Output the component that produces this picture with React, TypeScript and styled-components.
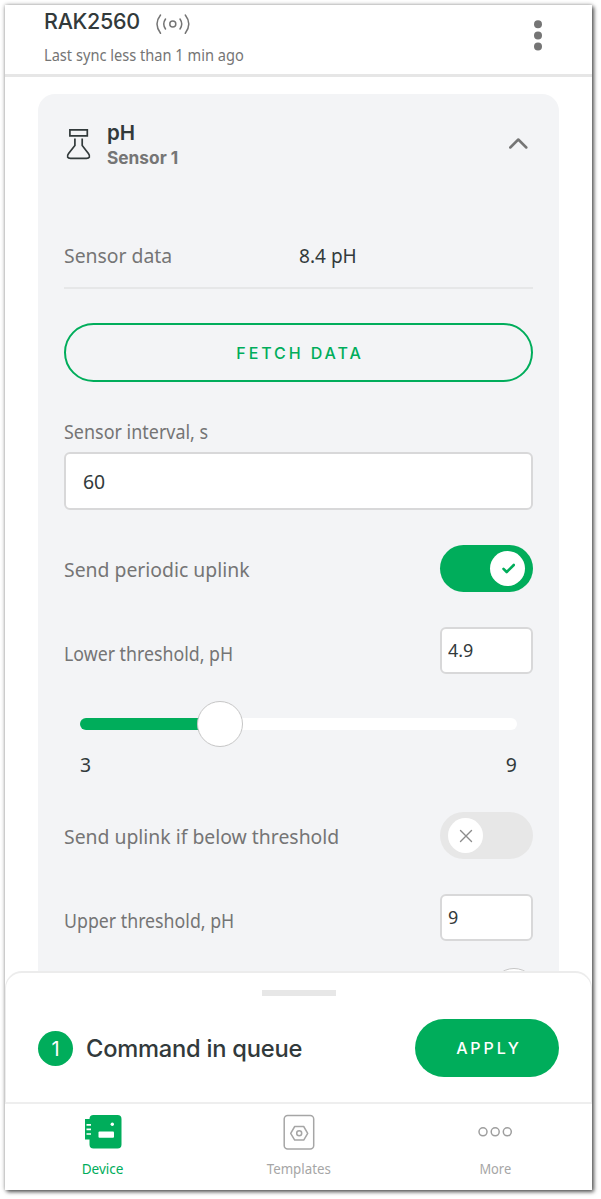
import React from "react";
import styled, { createGlobalStyle } from "styled-components";

const green = "#00ad5b";
const ink = "#323a3b";
const grey = "#757575";

const GlobalStyle = createGlobalStyle`
  * { box-sizing: border-box; }
  body { margin: 0; background: #fff; overflow: hidden; }
`;

const Page = styled.div`
  width: 601px;
  height: 1199px;
  padding: 5px 9px 9px 5px;
  background: #fff;
`;

const Phone = styled.div`
  width: 587px;
  height: 1185px;
  display: flex;
  flex-direction: column;
  background: #fff;
  box-shadow: 0 0 4px rgba(0, 0, 0, 0.35), 2px 2px 4px rgba(0, 0, 0, 0.6);
`;

const Label = styled.span<{ $size: number; $color?: string; $narrow?: number; $origin?: string }>`
  display: inline-block;
  font-family: "Noto Sans", sans-serif;
  font-size: ${(p) => p.$size}px;
  line-height: 28px;
  transform: scaleX(${(p) => p.$narrow ?? 0.945});
  transform-origin: ${(p) => p.$origin ?? "left"};
  color: ${(p) => p.$color ?? grey};
  white-space: nowrap;
`;

const Heading = styled.span<{ $size: number; $weight: number; $color?: string; $spacing?: number }>`
  font-family: Inter, sans-serif;
  font-size: ${(p) => p.$size}px;
  font-weight: ${(p) => p.$weight};
  line-height: 26px;
  letter-spacing: ${(p) => p.$spacing ?? 0}px;
  color: ${(p) => p.$color ?? ink};
  white-space: nowrap;
`;

const Header = styled.header`
  height: 72px;
  flex: none;
  display: flex;
  justify-content: space-between;
  padding: 3px 50px 0 39px;
  border-bottom: 3px solid #e6e6e6;
`;

const TitleRow = styled.div`
  display: flex;
  align-items: center;
  gap: 15px;
  height: 28px;
`;

const DeviceName = styled(Heading)`
  padding-bottom: 2px;
`;

const SyncRow = styled.div`
  margin-top: 5px;
`;

const MenuButton = styled.button`
  border: 0;
  background: none;
  padding: 12px 0 0;
  height: 44px;
  display: flex;
`;

const Content = styled.main`
  flex: 1;
  min-height: 0;
  overflow: hidden;
  padding: 17px 33px 0;
`;

const Card = styled.section`
  height: 1000px;
  padding: 0 26px;
  border-radius: 17px;
  background: #f3f4f6;
`;

const CardHeader = styled.div`
  height: 128px;
  padding-top: 26px;
  display: flex;
  align-items: flex-start;
`;

const FlaskSlot = styled.div`
  width: 43px;
  padding: 8px 0 0 2px;
`;

const Names = styled.div`
  flex: 1;
  display: flex;
  flex-direction: column;
`;

const SensorName = styled(Heading)`
  margin-top: -1px;
`;

const ChevronSlot = styled.div`
  padding: 16px 5px 0 0;
`;

const DataRow = styled.div`
  height: 67px;
  padding-top: 19px;
  display: grid;
  grid-template-columns: 1fr 1fr;
  border-bottom: 2px solid #e6e7e8;
`;

const FetchButton = styled.button`
  display: flex;
  align-items: center;
  justify-content: center;
  width: 100%;
  height: 59px;
  margin-top: 34px;
  padding: 1px 0 0 3px;
  border: 2px solid ${green};
  border-radius: 30px;
  background: transparent;
`;

const FieldLabel = styled.div`
  height: 70px;
  padding-top: 36px;
  display: flex;
`;

const Field = styled.div<{ $small?: boolean }>`
  display: flex;
  align-items: center;
  width: ${(p) => (p.$small ? "93px" : "100%")};
  height: ${(p) => (p.$small ? 47 : 58)}px;
  padding: ${(p) => (p.$small ? "0 0 2px 6px" : "0 0 1px 17px")};
  border: 2px solid #d8d8d9;
  border-radius: 6px;
  background: #fff;
`;

const Row = styled.div<{ $top: number }>`
  display: flex;
  align-items: center;
  justify-content: space-between;
  height: 47px;
  margin-top: ${(p) => p.$top}px;
`;

const RowLabel = styled.div<{ $shift?: number }>`
  padding-top: ${(p) => p.$shift ?? 0}px;
`;

const Switch = styled.div<{ $on?: boolean }>`
  display: flex;
  align-items: center;
  justify-content: ${(p) => (p.$on ? "flex-end" : "flex-start")};
  width: 93px;
  height: 47px;
  padding: 0 8px;
  border-radius: 24px;
  background: ${(p) => (p.$on ? green : "#e7e7e7")};
`;

const Knob = styled.div`
  display: flex;
  align-items: center;
  justify-content: center;
  width: 35px;
  height: 35px;
  border-radius: 50%;
  background: #fff;
`;

const Slider = styled.div<{ $top: number }>`
  display: flex;
  align-items: center;
  height: 46px;
  margin: ${(p) => p.$top}px 16px 0;
`;

const Track = styled.div<{ $filled?: boolean }>`
  flex: 1;
  height: 12px;
  border-radius: 6px;
  background: ${(p) => (p.$filled ? green : "#fff")};
`;

const Filled = styled(Track)`
  flex: none;
  margin-right: -8px;
`;

const Thumb = styled.div`
  flex: none;
  width: 46px;
  height: 46px;
  margin-right: -8px;
  border: 1px solid #c6c6c6;
  border-radius: 50%;
  background: #fff;
  z-index: 1;
`;

const Range = styled.div`
  display: flex;
  justify-content: space-between;
  height: 28px;
  margin: 3px 16px 0;
`;

const Sheet = styled.section`
  flex: none;
  height: 131px;
  padding: 17px 32px 0;
  border: 1px solid #ececec;
  border-top-width: 2px;
  border-bottom: 0;
  border-radius: 17px 17px 0 0;
  background: #fff;
  z-index: 1;
`;

const Grip = styled.div`
  width: 74px;
  height: 6px;
  margin: 0 auto;
  background: #e7e7e7;
`;

const Queue = styled.div`
  display: flex;
  align-items: center;
  height: 58px;
  margin-top: 23px;
`;

const Count = styled.div`
  display: flex;
  align-items: center;
  justify-content: center;
  width: 35px;
  height: 35px;
  margin-right: 13px;
  padding-top: 1px;
  border-radius: 50%;
  background: ${green};
`;

const QueueTitle = styled(Heading)`
  padding-top: 2px;
`;

const ApplyButton = styled.button`
  display: flex;
  align-items: center;
  justify-content: center;
  width: 144px;
  height: 58px;
  margin-left: auto;
  padding: 0 0 1px 4px;
  border: 0;
  border-radius: 29px;
  background: ${green};
`;

const Nav = styled.nav`
  flex: none;
  display: grid;
  grid-template-columns: 195px 198px 194px;
  height: 88px;
  border-top: 2px solid #eee;
  background: #fff;
  z-index: 1;
`;

const NavItem = styled.div`
  display: flex;
  flex-direction: column;
  align-items: center;
  padding-top: 10px;
`;

const NavIcon = styled.div`
  display: flex;
  align-items: center;
  height: 36px;
  margin-bottom: 5px;
`;

export default function App() {
  return (
    <Page>
      <GlobalStyle />
      <Phone>
        <Header>
          <div>
            <TitleRow>
              <DeviceName $size={21.5} $weight={500} $spacing={-0.3}>RAK2560</DeviceName>
              <svg width="36" height="24" viewBox="0 0 36 24" fill="none" stroke="#757575" strokeWidth="1.5" strokeLinecap="round">
                <circle cx="17.8" cy="14" r="3" />
                <path d="M10.500 9Q7 14 10.500 19M25 9Q28.500 14 25 19M5.500 5Q-1.500 14 5.500 23.300M30.300 5Q37.300 14 30.300 23.300" />
              </svg>
            </TitleRow>
            <SyncRow>
              <Label $size={15.8} $narrow={0.925}>Last sync less than 1 min ago</Label>
            </SyncRow>
          </div>
          <MenuButton aria-label="Menu">
            <svg width="8" height="32" viewBox="0 0 8 32" fill={grey}>
              <circle cx="4" cy="4.200" r="4" />
              <circle cx="4" cy="15.400" r="4" />
              <circle cx="4" cy="26.600" r="4" />
            </svg>
          </MenuButton>
        </Header>
        <Content>
          <Card>
            <CardHeader>
              <FlaskSlot>
                <svg width="26" height="32" viewBox="0 0 26 32" fill="none" stroke={ink} strokeWidth="1.700">
                  <path d="M3.900 1.900h17.400v6H3.900z" />
                  <path d="M8.900 10.500v7L2.600 25.600C.500 28.500 1.500 30.400 4.500 30.400h16c3 0 4-1.900 1.900-4.800l-6.200-8.100v-7" />
                </svg>
              </FlaskSlot>
              <Names>
                <Heading $size={20.5} $weight={600}>pH</Heading>
                <SensorName $size={17.3} $weight={700} $color={grey}>Sensor 1</SensorName>
              </Names>
              <ChevronSlot>
                <svg width="20" height="13" viewBox="0 0 20 13" fill="none" stroke={grey} strokeWidth="2.500" strokeLinecap="round" strokeLinejoin="round">
                  <path d="M2.300 10.500l8-8 8 8" />
                </svg>
              </ChevronSlot>
            </CardHeader>
            <DataRow>
              <Label $size={20.5}>Sensor data</Label>
              <Label $size={20.5} $color={ink} $narrow={0.93}>8.4 pH</Label>
            </DataRow>
            <FetchButton>
              <Heading $size={16} $weight={500} $color={green} $spacing={2.9}>FETCH DATA</Heading>
            </FetchButton>
            <FieldLabel>
              <Label $size={19.2} $narrow={0.935}>Sensor interval, s</Label>
            </FieldLabel>
            <Field>
              <Label $size={20.5} $color={ink}>60</Label>
            </Field>
            <Row $top={35}>
              <RowLabel><Label $size={20.5}>Send periodic uplink</Label></RowLabel>
              <Switch $on>
                <Knob>
                  <svg width="14" height="12" viewBox="0 0 14 12" fill="none" stroke={green} strokeWidth="2.600" strokeLinecap="round" strokeLinejoin="round">
                    <path d="M2.500 5.800l3.200 3.200L12.800 2" />
                  </svg>
                </Knob>
              </Switch>
            </Row>
            <Row $top={35}>
              <RowLabel $shift={7}><Label $size={19.2} $narrow={0.925}>Lower threshold, pH</Label></RowLabel>
              <Field $small><Label $size={18.500} $color={ink} $narrow={0.97}>4.9</Label></Field>
            </Row>
            <Slider $top={27}>
              <Filled $filled style={{ width: "125px" }} />
              <Thumb />
              <Track />
            </Slider>
            <Range>
              <Label $size={20.5} $color={ink}>3</Label>
              <Label $size={20.5} $color={ink} $origin="right">9</Label>
            </Range>
            <Row $top={34}>
              <RowLabel><Label $size={20.5}>Send uplink if below threshold</Label></RowLabel>
              <Switch>
                <Knob>
                  <svg width="14" height="14" viewBox="0 0 14 14" fill="none" stroke="#8c8c8c" strokeWidth="1.400" strokeLinecap="round">
                    <path d="M1.500 1.500l11 11M12.500 1.500l-11 11" />
                  </svg>
                </Knob>
              </Switch>
            </Row>
            <Row $top={35}>
              <RowLabel $shift={7}><Label $size={19.2} $narrow={0.925}>Upper threshold, pH</Label></RowLabel>
              <Field $small><Label $size={18.500} $color={ink} $narrow={0.97}>9</Label></Field>
            </Row>
            <Slider $top={27}>
              <Filled $filled style={{ width: "419px" }} />
              <Thumb />
            </Slider>
          </Card>
        </Content>
        <Sheet>
          <Grip />
          <Queue>
            <Count><Heading $size={20} $weight={400} $color="#fff">1</Heading></Count>
            <QueueTitle $size={23.7} $weight={450} $spacing={-0.24}>Command in queue</QueueTitle>
            <ApplyButton><Heading $size={16} $weight={500} $color="#fff" $spacing={2.9}>APPLY</Heading></ApplyButton>
          </Queue>
        </Sheet>
        <Nav>
          <NavItem>
            <NavIcon>
              <svg width="38" height="36" viewBox="0 0 38 36">
                <path fill={green} d="M5.500 5V5q0-4 4-4h24q4 0 4 4v25.500q0 4-4 4h-24q-4 0-4-4V25.500H1V5z" />
                <path stroke="#fff" strokeWidth="1.700" d="M2.500 10.800h4.500M2.500 15.300h4.500M2.500 20h4.500" />
                <circle cx="28.300" cy="10.200" r="1.700" fill="#fff" />
                <rect x="14.500" y="17.500" width="15.500" height="6.300" rx="1" fill="#fff" />
              </svg>
            </NavIcon>
            <Label $size={14} $color={green} $narrow={0.97} $origin="center">Device</Label>
          </NavItem>
          <NavItem>
            <NavIcon>
              <svg width="32" height="36" viewBox="0 0 32 36" fill="none" stroke="#a6a6a6" strokeWidth="1.500">
                <rect x="1.200" y="1.500" width="29.500" height="33.500" rx="3.500" />
                <path strokeLinejoin="round" d="M11.700 12.500h9l4 6.800-4 6.800h-9l-4-6.800z" />
                <circle cx="16.200" cy="19.300" r="2.500" />
              </svg>
            </NavIcon>
            <Label $size={14} $color="#a6a6a6" $narrow={0.95} $origin="center">Templates</Label>
          </NavItem>
          <NavItem>
            <NavIcon>
              <svg width="36" height="12" viewBox="0 0 36 12" fill="none" stroke="#9e9e9e" strokeWidth="1.500">
                <circle cx="6" cy="5.800" r="4" />
                <circle cx="18.200" cy="5.800" r="4" />
                <circle cx="30.300" cy="5.800" r="4" />
              </svg>
            </NavIcon>
            <Label $size={14} $color="#a6a6a6" $narrow={0.92} $origin="center">More</Label>
          </NavItem>
        </Nav>
      </Phone>
    </Page>
  );
}
